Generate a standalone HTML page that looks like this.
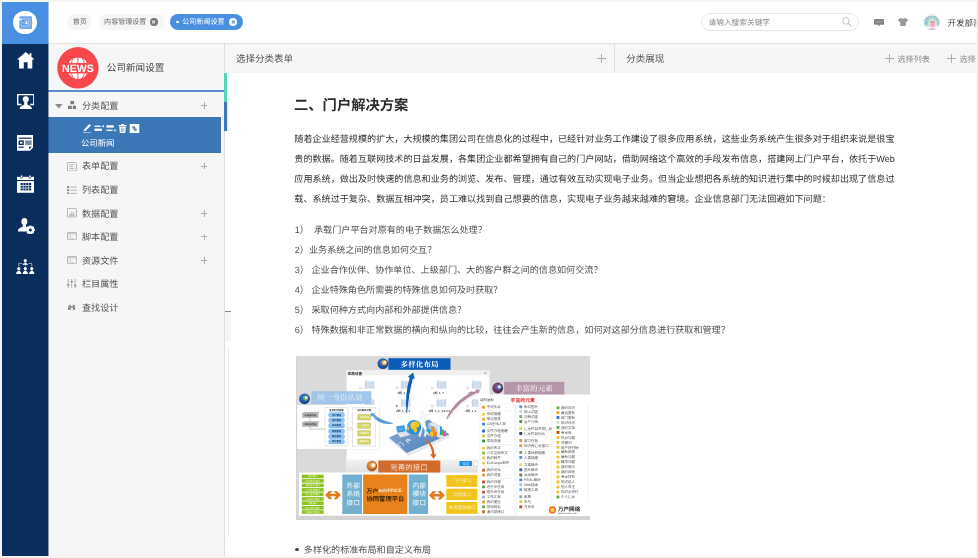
<!DOCTYPE html>
<html lang="zh-CN">
<head>
<meta charset="utf-8">
<title>公司新闻设置</title>
<style>
*{box-sizing:border-box;margin:0;padding:0}
html,body{width:978px;height:558px;overflow:hidden;background:#fff}
body{font-family:"Liberation Sans","Noto Sans CJK SC",sans-serif;color:#333;position:relative;text-rendering:geometricPrecision;-webkit-font-smoothing:antialiased}
.abs{position:absolute}
/* left nav */
#nav{left:2px;top:2px;width:46px;height:556px;background:#0b2d5c}
#logo{left:2px;top:2px;width:46px;height:41.5px;background:#4a90e2}
#logo .c{position:absolute;left:11.2px;top:8.7px;width:23.6px;height:23.6px;border-radius:50%;background:#fff}
.nico{position:absolute;left:15px;width:20px;height:20px}
/* top bar */
#top{left:48px;top:2px;width:930px;height:41.5px;background:#fff;border-bottom:1px solid #e4e4e4}
.tab{position:absolute;height:16px;top:14px;border-radius:8px;background:#f6f6f6;color:#666;font-size:7.05px;line-height:17.6px;white-space:nowrap;padding-left:6px;overflow:hidden}
.tab.on{background:#4a90e2;color:#fff;height:16.5px;top:13.9px;line-height:17.7px;border-radius:9px}
.x{position:absolute;top:50%;width:7.8px;height:7.8px;margin-top:-3.9px;border-radius:50%;background:#777}
.x:before,.x:after{content:"";position:absolute;left:3.45px;top:1.8px;width:.9px;height:4.2px;background:#f5f5f5;transform:rotate(45deg)}
.x:after{transform:rotate(-45deg)}
.tab.on .x{background:#fff}
.tab.on .x:before,.tab.on .x:after{background:#4a90e2}
#search{left:700.5px;top:13.4px;width:158.3px;height:17.7px;border:1px solid #e6e6e6;border-radius:9px;background:#fff;font-size:7.7px;line-height:17.6px;color:#8a8a8a;padding-left:7px}
/* left panel */
#panel{left:48px;top:43.5px;width:176.5px;height:515px;background:#f6f6f6;border-right:1px solid #dedede}
#ptitle{left:106.8px;top:61px;font-size:9.6px;line-height:16px;color:#444}
#pline{left:48px;top:90.2px;width:176px;height:1.4px;background:#5b8ccb}
.row{position:absolute;left:48.5px;width:175px;height:23.6px;font-size:9.1px;line-height:23.6px;color:#555}
.row .t{position:absolute;left:33.5px;top:1px}
.row .p{position:absolute;left:152.4px;top:8.5px;width:6.6px;height:6.6px}
.row .p:before{content:"";position:absolute;left:0;top:2.9px;width:6.6px;height:.8px;background:#adadad}
.row .p:after{content:"";position:absolute;top:0;left:2.9px;height:6.6px;width:.8px;background:#adadad}
.row .i{position:absolute;left:19px;top:7px;width:9.5px;height:9.5px}
#sel{left:48px;top:117.2px;width:173px;height:35.6px;background:#3c77b8}
#sel .t{position:absolute;left:33px;top:19.6px;font-size:8.4px;line-height:12px;color:#fff}
/* content header */
#chead{left:225px;top:43.5px;width:753px;height:29.3px;background:#f6f6f6}
#chead .h{position:absolute;top:0;font-size:9.5px;line-height:32.4px;color:#555}
#chead .s{position:absolute;top:0;font-size:8.1px;line-height:32.6px;color:#8a8a8a}
.plus{position:absolute;width:9px;height:9px}
.plus:before{content:"";position:absolute;left:0;top:4.1px;width:9px;height:.8px;background:#adadad}
.plus:after{content:"";position:absolute;top:0;left:4.1px;height:9px;width:.8px;background:#adadad}
/* content */
#h2{left:294px;top:93.9px;font-size:14.3px;line-height:24px;font-weight:700;color:#2c2c2c;white-space:nowrap}
.pl{position:absolute;left:294.3px;font-size:9.1px;line-height:20px;height:20px;color:#303030;white-space:nowrap}
.li{position:absolute;left:294.8px;font-size:9.1px;line-height:20px;height:20px;color:#505050;white-space:pre}
</style>
</head>
<body><div id="root" style="position:absolute;left:0;top:0;width:978px;height:558px;will-change:transform;transform:translateZ(0);filter:blur(.45px)">
<div id="nav" class="abs"></div>
<div id="logo" class="abs"><div class="c"></div></div>
<div class="abs" style="left:48px;top:43.5px;width:1px;height:515px;background:rgba(11,45,92,.45);z-index:3"></div><div class="abs" style="left:48px;top:2px;width:1px;height:41.5px;background:rgba(74,144,226,.55);z-index:3"></div>

<!-- logo glyph -->
<svg class="abs" style="left:18.6px;top:15.9px" width="13.6" height="13.2" viewBox="0 0 13.6 13.2"><rect x=".3" y=".3" width="13" height="12.6" rx="1.4" fill="#6fa6ea"/><rect x="1.9" y="1.9" width="9.8" height="9.4" rx=".6" fill="#a4c6f1"/><rect x="3.2" y="3.2" width="7.2" height="6.8" fill="none" stroke="#6fa6ea" stroke-width=".9"/><rect x="0" y="2.7" width="2.6" height="1.5" fill="#fff"/><path d="M2.6 4.6H8.4V8.8H2.6V7.5H7V5.9H2.6Z" fill="#4a90e2"/><rect x="5.6" y="5.4" width="2.6" height="2.6" fill="#fff"/><path d="M5.4 5.2 7 6.7 5.4 8.2Z" fill="#4a90e2"/></svg>
<!-- home -->
<svg class="abs" style="left:16.6px;top:52.3px" width="17.4" height="16.6" viewBox="0 0 17.4 16.6"><path d="M8.7 0 17.4 7.4H15.3V16.6H10.6V10.3H6.8V16.6H2.1V7.4H0Z" fill="#fff"/><rect x="12.6" y="1.2" width="1.8" height="3.6" fill="#fff"/></svg>
<!-- monitor person -->
<svg class="abs" style="left:16.6px;top:93.8px" width="17.6" height="15.6" viewBox="0 0 17.6 15.6"><path d="M0 0H17.6V11.2H13.2V9.8H16.2V1.3H1.4V9.8H4.4V11.2H0Z" fill="#fff"/><circle cx="8.8" cy="5.2" r="3" fill="#fff"/><path d="M2.6 15.6C2.6 11.6 6 11.4 7.2 10.4V8h3.2v2.4C11.6 11.4 15 11.6 15 15.6Z" fill="#fff"/></svg>
<!-- news -->
<svg class="abs" style="left:17px;top:135.2px" width="16.2" height="15.8" viewBox="0 0 16.2 15.8"><path d="M0 0H16.2V12.6L13 15.8H0Z" fill="#fff"/><rect x="1.6" y="2.6" width="13" height="1.2" fill="#0b2d5c"/><rect x="1.6" y="5.4" width="5.2" height="4.6" fill="#0b2d5c"/><rect x="3" y="6.8" width="2.4" height="1.8" fill="#fff"/><rect x="8.2" y="5.4" width="6.4" height="4.6" fill="#0b2d5c" opacity=".55"/><rect x="1.6" y="11.6" width="5.2" height="1.2" fill="#0b2d5c"/><path d="M12.2 11.8h2.6l-2.6 2.6z" fill="#0b2d5c"/></svg>
<!-- calendar -->
<svg class="abs" style="left:16.6px;top:175px" width="17.6" height="17.8" viewBox="0 0 17.6 17.8"><path d="M0 1.8H17.6V17.8H0Z" fill="#fff"/><rect x="0" y="5" width="17.6" height="1.1" fill="#0b2d5c"/><rect x="3.6" y="0" width="2" height="3.4" rx="1" fill="#fff" stroke="#0b2d5c" stroke-width=".6"/><rect x="12" y="0" width="2" height="3.4" rx="1" fill="#fff" stroke="#0b2d5c" stroke-width=".6"/><g fill="#0b2d5c"><rect x="3.6" y="8" width="2.2" height="2"/><rect x="6.4" y="8" width="2.2" height="2"/><rect x="9.2" y="8" width="2.2" height="2"/><rect x="12" y="8" width="2.2" height="2"/><rect x="3.6" y="10.7" width="2.2" height="2"/><rect x="6.4" y="10.7" width="2.2" height="2"/><rect x="9.2" y="10.7" width="2.2" height="2"/><rect x="12" y="10.7" width="2.2" height="2"/><rect x="3.6" y="13.4" width="2.2" height="2"/><rect x="6.4" y="13.4" width="2.2" height="2"/><rect x="9.2" y="13.4" width="2.2" height="2"/><rect x="12" y="13.4" width="2.2" height="2"/></g></svg>
<!-- person gear -->
<svg class="abs" style="left:18.4px;top:217.6px" width="17" height="16.4" viewBox="0 0 17 16.4"><ellipse cx="6.4" cy="3.6" rx="3" ry="3.6" fill="#fff"/><path d="M0 13.4C0 9.6 3.4 9.8 4.8 8.6V6.4h3.2v2.2C9 9.4 9.8 9.4 10.6 9.8 8.6 10.6 8 12 8.2 13.4Z" fill="#fff"/><circle cx="12.4" cy="12" r="3.1" fill="none" stroke="#fff" stroke-width="1.9"/><g stroke="#fff" stroke-width="1.7"><path d="M12.4 7.4v9.2M7.8 12h9.2M9.15 8.75l6.5 6.5M15.65 8.75l-6.5 6.5"/></g><circle cx="12.4" cy="12" r="1.5" fill="#0b2d5c"/></svg>
<!-- org chart -->
<svg class="abs" style="left:16px;top:258.6px" width="18.6" height="15" viewBox="0 0 18.6 15"><g fill="#fff"><circle cx="9.3" cy="1.6" r="1.6"/><path d="M6.8 6C6.8 4 8.3 4.2 8.6 3.4h1.4c.3.8 1.8.6 1.8 2.6Z"/><circle cx="2.8" cy="9.6" r="1.6"/><path d="M.2 15C.2 12.4 1.8 12.4 2.1 11.4h1.4c.3 1 1.9 1 1.9 3.6Z"/><circle cx="9.3" cy="9.6" r="1.6"/><path d="M6.7 15C6.7 12.4 8.3 12.4 8.6 11.4h1.4c.3 1 1.9 1 1.9 3.6Z"/><circle cx="15.8" cy="9.6" r="1.6"/><path d="M13.2 15C13.2 12.4 14.8 12.4 15.1 11.4h1.4c.3 1 1.9 1 1.9 3.6Z"/></g><path d="M2.8 7.4V4.4H6M15.8 7.4V4.4H12.6M9.3 6V7.6" fill="none" stroke="#fff" stroke-width=".7" opacity=".8"/></svg>
<div id="top" class="abs"></div>
<div class="tab" style="left:66.5px;width:25.8px;padding-left:6.2px">首页</div>
<div class="tab" style="left:98.5px;width:66px;padding-left:5.6px">内容管理设置<span class="x" style="left:51.5px"></span></div>
<div class="tab on" style="left:170px;width:73px;padding-left:12.3px">公司新闻设置<span class="x" style="left:59.3px"></span><span class="abs" style="left:6.2px;top:7.1px;width:2.4px;height:2.4px;border-radius:50%;background:#fff"></span></div>
<div id="search" class="abs">请输入搜索关键字</div>
<div class="abs" style="left:947.6px;top:14.9px;font-size:8.45px;line-height:16px;color:#444;white-space:nowrap">开发部测试</div>


<!-- search icon -->
<svg class="abs" style="left:841px;top:16.1px" width="12" height="12" viewBox="0 0 12 12"><circle cx="4.9" cy="5" r="3.2" fill="none" stroke="#b4b4b4" stroke-width=".8"/><path d="M7.3 7.4 10.2 10.2" stroke="#b4b4b4" stroke-width="1" stroke-linecap="round"/></svg>
<!-- chat icon -->
<svg class="abs" style="left:873.8px;top:18.9px" width="10.2" height="7.4" viewBox="0 0 10.2 7.4"><path d="M1 0H9.2Q10.2 0 10.2 1V4.8Q10.2 5.8 9.2 5.8H6.3L5.1 7.2 3.9 5.8H1Q0 5.8 0 4.800V1Q0 0 1 0Z" fill="#858585"/><g fill="#c4c4c4"><rect x="2.6" y="2.4" width="1" height="1"/><rect x="4.6" y="2.4" width="1" height="1"/><rect x="6.6" y="2.4" width="1" height="1"/></g></svg>
<!-- shirt icon -->
<svg class="abs" style="left:897.6px;top:18.1px" width="10" height="8.2" viewBox="0 0 10 8.200"><path d="M3 0Q5 1.500 7 0L10 1.600 9 4 7.800 3.500V8.200H2.200V3.500L1 4 0 1.600Z" fill="#989898"/></svg>
<!-- avatar -->
<svg class="abs" style="left:923.1px;top:12.8px" width="17.6" height="17.6" viewBox="0 0 17.6 17.6"><defs><clipPath id="avc"><circle cx="8.8" cy="8.8" r="8.6"/></clipPath></defs><g clip-path="url(#avc)"><rect width="17.6" height="17.6" fill="#f1f3f4"/><path d="M1 11Q.6 3.400 8.400 2.400 16 2.600 16.600 10.500 16 13 14 13.500L13.300 9Q12 5.600 9 6 6 6.400 5.600 9.500L5.800 13.600Q2.600 13.800 1 11Z" fill="#a5d3dc"/><g fill="#c58a7c"><circle cx="3" cy="7" r=".7"/><circle cx="5.600" cy="3.800" r=".6"/><circle cx="12" cy="3.600" r=".7"/><circle cx="15" cy="7" r=".6"/><circle cx="2.600" cy="10.800" r=".6"/><circle cx="15.200" cy="10.800" r=".6"/></g><g fill="#4eb2c8"><circle cx="4.200" cy="5.200" r=".6"/><circle cx="9" cy="3" r=".6"/><circle cx="14" cy="5.200" r=".6"/><circle cx="3.800" cy="9.600" r=".6"/></g><path d="M5.800 9.500Q6 6.400 9.200 6.200 12.600 6.200 13 9.600L13.400 14 5.800 14Z" fill="#ecdfd2"/><ellipse cx="9.500" cy="10" rx="2.700" ry="3.300" fill="#e6c6ba"/><path d="M7.400 9.200H11.600" stroke="#8a7f88" stroke-width=".7"/><circle cx="9.500" cy="12.200" r="2" fill="#f4a9bd"/><path d="M4.500 17.600Q9 12.600 14 17.600Z" fill="#dfb6e6"/></g></svg>
<div id="panel" class="abs"></div>

<!-- NEWS logo -->
<svg class="abs" style="left:56.8px;top:46.5px" width="42" height="42" viewBox="0 0 42 42"><circle cx="20.9" cy="20.800" r="20.700" fill="#f9484b"/><clipPath id="gt"><rect x="0" y="10.400" width="42" height="5.700"/></clipPath><clipPath id="gb"><rect x="0" y="26.400" width="42" height="5.700"/></clipPath><g clip-path="url(#gt)"><circle cx="20.900" cy="21.200" r="10.800" fill="#fff"/><g stroke="#f9484b" stroke-width=".9" fill="none"><path d="M20.900 10V17"/><path d="M17.200 10Q14.800 13 14.300 17M24.600 10Q27 13 27.500 17"/><path d="M13.600 11.500Q12 13.500 11.300 17M28.200 11.500Q29.800 13.500 30.500 17"/></g></g><g clip-path="url(#gb)"><circle cx="20.900" cy="21.200" r="10.800" fill="#fff"/><g stroke="#f9484b" stroke-width=".9" fill="none"><path d="M20.900 25V33"/><path d="M17.200 32.400Q14.800 29.400 14.300 25.400M24.600 32.400Q27 29.400 27.500 25.400"/><path d="M13.600 31Q12 29 11.300 25.400M28.200 31Q29.800 29 30.500 25.400"/></g></g><text x="20.900" y="25.200" font-family="Liberation Sans,sans-serif" font-weight="700" font-size="10.700" fill="#fff" text-anchor="middle" textLength="31.600" lengthAdjust="spacingAndGlyphs">NEWS</text></svg>
<!-- tree icons -->
<svg class="abs" style="left:55.400px;top:103.500px" width="7.600" height="4.600" viewBox="0 0 7.600 4.600"><path d="M0 0H7.600L3.800 4.600Z" fill="#8c8c8c"/></svg>
<svg class="abs" style="left:67.500px;top:101.200px" width="8.600" height="8.200" viewBox="0 0 8.600 8.200"><g fill="#7d7d7d"><rect x="2.300" y="0" width="3.800" height="3.300" rx=".4"/><rect x="0" y="4.700" width="3.800" height="3.500" rx=".4"/><rect x="4.800" y="4.700" width="3.800" height="3.500" rx=".4"/></g></svg>
<svg class="abs" style="left:66.800px;top:161.500px" width="9.800" height="9.400" viewBox="0 0 9.800 9.400"><rect x=".45" y=".45" width="8.900" height="8.500" rx=".8" fill="none" stroke="#a9a9a9" stroke-width=".9"/><path d="M2.400 2.800H7.400M2.400 4.700H5.800M2.400 6.600H7.400" stroke="#a9a9a9" stroke-width=".8"/></svg>
<svg class="abs" style="left:66.800px;top:185.500px" width="9.800" height="8.400" viewBox="0 0 9.800 8.400"><g fill="#8d8d8d"><rect x="0" y="0" width="2.200" height="2"/><rect x="0" y="3.200" width="2.200" height="2"/><rect x="0" y="6.400" width="2.200" height="2"/></g><path d="M3.600 1H9.800M3.600 4.200H9.800M3.600 7.400H9.800" stroke="#a5a5a5" stroke-width=".8"/></svg>
<svg class="abs" style="left:66.800px;top:208.200px" width="9.800" height="9.400" viewBox="0 0 9.800 9.400"><rect x=".45" y=".45" width="8.900" height="8.500" rx=".8" fill="none" stroke="#a9a9a9" stroke-width=".9"/><path d="M3 7.400V5.200M4.900 7.400V3.600M6.800 7.400V4.600" stroke="#a0a0a0" stroke-width=".9"/><path d="M2.200 7.500H7.600" stroke="#a0a0a0" stroke-width=".6"/></svg>
<svg class="abs" style="left:66.800px;top:232.300px" width="9.800" height="8.200" viewBox="0 0 9.800 8.200"><rect x=".45" y=".45" width="8.900" height="7.300" rx=".7" fill="none" stroke="#a9a9a9" stroke-width=".9"/><path d="M.5 1.900H9.300" stroke="#a9a9a9" stroke-width=".7"/><path d="M2.200 3.600 3.700 4.900 2.200 6.200M4.400 6.300H6.200" fill="none" stroke="#a0a0a0" stroke-width=".7"/></svg>
<svg class="abs" style="left:66.800px;top:255.900px" width="9.800" height="8.200" viewBox="0 0 9.800 8.200"><rect x=".45" y=".45" width="8.900" height="7.300" rx=".7" fill="none" stroke="#a9a9a9" stroke-width=".9"/><path d="M.5 1.900H9.300" stroke="#a9a9a9" stroke-width=".7"/><path d="M2.200 3.600 3.700 4.900 2.200 6.200M4.400 6.300H6.200" fill="none" stroke="#a0a0a0" stroke-width=".7"/></svg>
<svg class="abs" style="left:67.200px;top:278.800px" width="9.400" height="9" viewBox="0 0 9.400 9"><path d="M1.200 0V9M4.700 0V9M8.200 0V9" stroke="#9a9a9a" stroke-width=".8"/><path d="M0 5.800H2.400M3.500 2.600H5.900M7 6.600H9.400" stroke="#8a8a8a" stroke-width="1.200"/></svg>
<svg class="abs" style="left:67.600px;top:304.300px" width="7.800" height="6.200" viewBox="0 0 7.800 6.200"><g fill="#8f8f8f"><path d="M.9 1.200 2.900 0.400V6.200H0V3.400Z"/><path d="M6.900 1.200 4.900.4V6.200H7.800V3.400Z"/><rect x="2.900" y="2.200" width="2" height="1.600"/></g></svg>
<div id="ptitle" class="abs">公司新闻设置</div>
<div id="pline" class="abs"></div>
<div class="row" style="top:93.7px"><span class="t">分类配置</span><span class="p"></span></div>
<div id="sel" class="abs"><svg class="abs" style="left:35px;top:6.700px" width="57" height="9.600" viewBox="0 0 57 9.600"><g fill="#fff"><path d="M6.400 0 8 1.400 2.600 6.800.6 7.400 1.100 5.400Z"/><rect x="0" y="8.500" width="8.200" height=".9"/><rect x="11.500" y="1.600" width="6.200" height="1.300"/><rect x="11.500" y="4.600" width="7.400" height="2.300"/><path d="M18.600 2.200 20.800 0.900V3.500Z"/><rect x="23.400" y="1.300" width="7.400" height="2.300"/><rect x="23.400" y="5.600" width="6.200" height="1.300"/><path d="M30.400 6.200 32.600 4.900V7.500Z"/><path d="M35.600 1.100H43.600V2.200H35.600ZM38.200 0H41V1.100H38.200ZM36.300 2.800H42.900L42.300 9.100H36.900Z"/><rect x="46.700" y="0" width="9.600" height="9.100"/></g><path d="M38.400 3.800V8M39.600 3.800V8M40.800 3.800V8" stroke="#3c77b8" stroke-width=".5"/><path d="M49.600 2.600 51.600 2.600 53.400 6.400 51.400 6.400ZM50.200 3.600 49 3.600M52.800 5.400 54 5.400" stroke="#3c77b8" stroke-width=".6" fill="#6d9bd0"/></svg><span class="t">公司新闻</span></div>
<div class="row" style="top:154.3px"><span class="t">表单配置</span><span class="p"></span></div>
<div class="row" style="top:177.9px"><span class="t">列表配置</span></div>
<div class="row" style="top:201.5px"><span class="t">数据配置</span><span class="p"></span></div>
<div class="row" style="top:225.1px"><span class="t">脚本配置</span><span class="p"></span></div>
<div class="row" style="top:248.7px"><span class="t">资源文件</span><span class="p"></span></div>
<div class="row" style="top:272.3px"><span class="t">栏目属性</span></div>
<div class="row" style="top:295.9px"><span class="t">查找设计</span></div>

<div id="chead" class="abs">
 <span class="h" style="left:11px">选择分类表单</span>
 <span class="plus" style="left:371.7px;top:10.8px"></span>
 <span class="abs" style="left:389.3px;top:0;width:1px;height:29.3px;background:#dedede"></span>
 <span class="h" style="left:401.3px">分类展现</span>
 <span class="plus" style="left:660px;top:10.8px"></span>
 <span class="s" style="left:672.5px">选择列表</span>
 <span class="plus" style="left:722px;top:10.8px"></span>
 <span class="s" style="left:734.5px">选择</span>
</div>


<div class="abs" style="left:224.300px;top:72.800px;width:3px;height:29px;background:#50d9b9"></div>
<div class="abs" style="left:224.300px;top:101.800px;width:3px;height:29.200px;background:#3c77b8;box-shadow:1.500px 0 1.500px rgba(120,160,230,.25)"></div>
<div class="abs" style="left:224.500px;top:311px;width:6.800px;height:1px;background:#8e8e8e"></div>
<div class="abs" style="left:224.500px;top:312px;width:6.800px;height:29.500px;background:#f5f5f5"></div>
<div class="abs" style="left:228px;top:348px;width:1px;height:188.600px;background:#ececec"></div>
<!--DG--><svg id="dg" class="abs" style="left:295.7px;top:355.7px" width="294" height="164" viewBox="295.7 355.7 294 164" font-family='Liberation Sans,Noto Sans CJK SC,sans-serif'>
<defs><radialGradient id="cb" cx=".4" cy=".35" r=".7"><stop offset="0" stop-color="#3f7fd0"/><stop offset="1" stop-color="#0b3c86"/></radialGradient><radialGradient id="cm" cx=".4" cy=".35" r=".7"><stop offset="0" stop-color="#8e5a86"/><stop offset="1" stop-color="#4a1f48"/></radialGradient><radialGradient id="co" cx=".4" cy=".35" r=".7"><stop offset="0" stop-color="#f0a050"/><stop offset="1" stop-color="#a8500f"/></radialGradient><linearGradient id="pl" x1="0" y1="0" x2="1" y2="1"><stop offset="0" stop-color="#86a9d2"/><stop offset="1" stop-color="#4f7db5"/></linearGradient><linearGradient id="wb" x1="0" y1="0" x2="0" y2="1"><stop offset="0" stop-color="#f4f4f4"/><stop offset="1" stop-color="#dedede"/></linearGradient></defs>
<rect x="295.7" y="355.7" width="294" height="164" fill="#dadada"/>
<rect x="346.3" y="369.7" width="142.8" height="103" fill="#fff"/>
<rect x="346.3" y="369.7" width="142.8" height="5.3" fill="#f0f0f0"/>
<rect x="346.3" y="458.9" width="131.2" height="13.8" fill="url(#wb)"/>
<text x="347.4" y="374.3" font-size="3.6" font-weight="700" fill="#222">布局设置</text>
<path d="M484.2 371.7l1.8 1.8m0-1.8l-1.8 1.8" stroke="#777" stroke-width=".5"/>
<rect x="459.2" y="460.8" width="12.5" height="4.9" rx=".6" fill="#1e8fe6"/><text x="465.4" y="464.5" font-size="3.2" fill="#d8ecff" text-anchor="middle">保存</text>
<rect x="473.4" y="460.8" width="4" height="4.9" rx=".5" fill="#fff" stroke="#bbb" stroke-width=".4"/>
<rect x="364.5" y="381" width="9.6" height="7.2" fill="#c9d7ea"/><rect x="364.5" y="380" width="2.6" height="1.2" fill="#dbe5f2"/>
<path d="M367.7 381.6V388M370.9 381.6V388" stroke="#eef3f9" stroke-width=".7"/>
<circle cx="360.3" cy="387.6" r="1.1" fill="#fff" stroke="#aaa" stroke-width=".4"/>
<rect x="400.6" y="381" width="9.6" height="7.2" fill="#c9d7ea"/><rect x="400.6" y="380" width="2.6" height="1.2" fill="#dbe5f2"/>
<path d="M403.8 381.6V388M407.0 381.6V388" stroke="#eef3f9" stroke-width=".7"/>
<circle cx="396.4" cy="387.6" r="1.1" fill="#fff" stroke="#aaa" stroke-width=".4"/>
<rect x="436.4" y="381" width="9.6" height="7.2" fill="#c9d7ea"/><rect x="436.4" y="380" width="2.6" height="1.2" fill="#dbe5f2"/>
<path d="M439.6 381.6V388M442.8 381.6V388" stroke="#eef3f9" stroke-width=".7"/>
<circle cx="432.2" cy="387.6" r="1.1" fill="#fff" stroke="#aaa" stroke-width=".4"/>
<rect x="471.5" y="381" width="9.6" height="7.2" fill="#c9d7ea"/><rect x="471.5" y="380" width="2.6" height="1.2" fill="#dbe5f2"/>
<path d="M474.7 381.6V388M477.9 381.6V388" stroke="#eef3f9" stroke-width=".7"/>
<circle cx="467.3" cy="387.6" r="1.1" fill="#fff" stroke="#aaa" stroke-width=".4"/>
<rect x="364.5" y="399.2" width="9.6" height="7.2" fill="#c9d7ea"/><rect x="364.5" y="398.2" width="2.6" height="1.2" fill="#dbe5f2"/>
<path d="M367.7 399.8V406.2M370.9 399.8V406.2" stroke="#eef3f9" stroke-width=".7"/>
<circle cx="360.3" cy="405.6" r="1.1" fill="#fff" stroke="#aaa" stroke-width=".4"/>
<rect x="400.6" y="399.2" width="9.6" height="7.2" fill="#c9d7ea"/><rect x="400.6" y="398.2" width="2.6" height="1.2" fill="#dbe5f2"/>
<path d="M403.8 399.8V406.2M407.0 399.8V406.2" stroke="#eef3f9" stroke-width=".7"/>
<circle cx="396.4" cy="405.6" r="1.1" fill="#fff" stroke="#aaa" stroke-width=".4"/>
<rect x="436.4" y="399.2" width="9.6" height="7.2" fill="#c9d7ea"/><rect x="436.4" y="398.2" width="2.6" height="1.2" fill="#dbe5f2"/>
<path d="M439.6 399.8V406.2M442.8 399.8V406.2" stroke="#eef3f9" stroke-width=".7"/>
<circle cx="432.2" cy="405.6" r="1.1" fill="#fff" stroke="#aaa" stroke-width=".4"/>
<rect x="471.5" y="399.2" width="9.6" height="7.2" fill="#c9d7ea"/><rect x="471.5" y="398.2" width="2.6" height="1.2" fill="#dbe5f2"/>
<path d="M474.7 399.8V406.2M477.9 399.8V406.2" stroke="#eef3f9" stroke-width=".7"/>
<circle cx="467.3" cy="405.6" r="1.1" fill="#fff" stroke="#aaa" stroke-width=".4"/>
<circle cx="396.4" cy="405.6" r=".7" fill="#1b4f7a"/>
<text x="397.2" y="393.6" font-size="2.9" font-weight="700" fill="#333">2列_1</text>
<text x="432.6" y="393.6" font-size="2.9" font-weight="700" fill="#333">2列_1_7</text>
<text x="468.0" y="393.6" font-size="2.9" font-weight="700" fill="#333">2列</text>
<text x="395.6" y="411.3" font-size="2.9" font-weight="700" fill="#333">2列_1_1_1</text>
<text x="428.4" y="411.3" font-size="2.9" font-weight="700" fill="#333">2列_1_1_1-1:1:1</text>
<text x="465.0" y="411.3" font-size="2.9" font-weight="700" fill="#333">4列_1_1_</text>
<rect x="388.1" y="357.9" width="62.1" height="11.6" fill="#0a5cb8"/>
<text x="419.3" y="366.5" font-size="7.5" font-weight="700" fill="#fff" text-anchor="middle" font-family='Liberation Serif,Noto Serif CJK SC,serif' letter-spacing=".1">多样化布局</text>
<circle cx="382.6" cy="363.3" r="5.4" fill="url(#cb)"/><circle cx="384" cy="362.4" r="2.6" fill="#e9a35a"/><circle cx="384.4" cy="362" r="1.5" fill="#fff" opacity=".85"/>
<rect x="478.3" y="394.2" width="111.4" height="122" fill="#fff"/>
<rect x="478.8" y="403.6" width="35.6" height="112" fill="none" stroke="#e3edf6" stroke-width=".5"/>
<path d="M515.8 403V516M551.6 403V503M588 403V503" stroke="#e6eff7" stroke-width=".7"/>
<text x="480" y="400.5" font-size="3.3" fill="#333">结构图视</text>
<text x="510.2" y="401.4" font-size="4.9" font-weight="700" fill="#d8312c">丰富的元素</text>
<rect x="481.8" y="405.5" width="2.9" height="2.9" rx=".4" fill="#f29a2e"/><text x="486.4" y="408.2" font-size="3.5" fill="#505050">今日头条</text>
<rect x="481.8" y="412.5" width="2.9" height="2.9" rx=".4" fill="#f3d24a"/><text x="486.4" y="415.2" font-size="3.5" fill="#505050">系统提醒</text>
<rect x="481.8" y="417.5" width="2.9" height="2.9" rx=".4" fill="#e7b53c"/><text x="486.4" y="420.2" font-size="3.5" fill="#505050">单点登录</text>
<rect x="481.8" y="422.4" width="2.9" height="2.9" rx=".4" fill="#3d8bd6"/><text x="486.4" y="425.1" font-size="3.5" fill="#505050">OA在线人数</text>
<rect x="481.8" y="429.3" width="2.9" height="2.9" rx=".4" fill="#2f6fd0"/><text x="486.4" y="432.1" font-size="3.5" fill="#505050">文件办理提醒</text>
<rect x="481.8" y="434.3" width="2.9" height="2.9" rx=".4" fill="#d8c13a"/><text x="486.4" y="437.1" font-size="3.5" fill="#505050">文件办理</text>
<rect x="481.8" y="439.3" width="2.9" height="2.9" rx=".4" fill="#4c9a45"/><text x="486.4" y="442.1" font-size="3.5" fill="#505050">常用流程</text>
<rect x="481.8" y="446.4" width="2.9" height="2.9" rx=".4" fill="#f0cf3e"/><text x="486.4" y="449.1" font-size="3.5" fill="#505050">我的收文</text>
<rect x="481.8" y="451.3" width="2.9" height="2.9" rx=".4" fill="#8dbb4e"/><text x="486.4" y="454.1" font-size="3.5" fill="#505050">公文交换收文</text>
<rect x="481.8" y="456.2" width="2.9" height="2.9" rx=".4" fill="#eccb57"/><text x="486.4" y="458.9" font-size="3.5" fill="#505050">我的邮件</text>
<rect x="481.8" y="461.4" width="2.9" height="2.9" rx=".4" fill="#eccb57"/><text x="486.4" y="464.1" font-size="3.5" fill="#505050">Exchange邮件</text>
<rect x="481.8" y="468.5" width="2.9" height="2.9" rx=".4" fill="#c9702e"/><text x="486.4" y="471.2" font-size="3.5" fill="#505050">我的论坛</text>
<rect x="481.8" y="473.4" width="2.9" height="2.9" rx=".4" fill="#e09a3a"/><text x="486.4" y="476.1" font-size="3.5" fill="#505050">我的调查</text>
<rect x="481.8" y="480.2" width="2.9" height="2.9" rx=".4" fill="#cf4a35"/><text x="486.4" y="482.9" font-size="3.5" fill="#505050">我的日程</text>
<rect x="481.8" y="485.1" width="2.9" height="2.9" rx=".4" fill="#5aa347"/><text x="486.4" y="487.9" font-size="3.5" fill="#505050">进行中任务</text>
<rect x="481.8" y="490.4" width="2.9" height="2.9" rx=".4" fill="#b55b3a"/><text x="486.4" y="493.1" font-size="3.5" fill="#505050">督办的任务</text>
<rect x="481.8" y="495.3" width="2.9" height="2.9" rx=".4" fill="#9ab9d6"/><text x="486.4" y="498.1" font-size="3.5" fill="#505050">工作汇报</text>
<rect x="481.8" y="500.2" width="2.9" height="2.9" rx=".4" fill="#e0a03a"/><text x="486.4" y="502.9" font-size="3.5" fill="#505050">我的便签</text>
<rect x="481.8" y="505.1" width="2.9" height="2.9" rx=".4" fill="#6aa84f"/><text x="486.4" y="507.9" font-size="3.5" fill="#505050">常用网址</text>
<rect x="481.8" y="510.0" width="2.9" height="2.9" rx=".4" fill="#b5762a"/><text x="486.4" y="512.8" font-size="3.5" fill="#505050">通讯录接口</text>
<path d="M479.4 410.4H511.8" stroke="#e4e4e4" stroke-width=".4"/>
<path d="M479.4 427.3H511.8" stroke="#e4e4e4" stroke-width=".4"/>
<path d="M479.4 444.3H511.8" stroke="#e4e4e4" stroke-width=".4"/>
<path d="M479.4 466.4H511.8" stroke="#e4e4e4" stroke-width=".4"/>
<path d="M479.4 478.3H511.8" stroke="#e4e4e4" stroke-width=".4"/>
<rect x="519.0" y="405.0" width="2.9" height="2.9" rx=".4" fill="#5b9bd5"/><text x="523.6" y="407.8" font-size="3.5" fill="#505050">新闻图片</text>
<rect x="519.0" y="409.8" width="2.9" height="2.9" rx=".4" fill="#d9d9d9"/><text x="523.6" y="412.6" font-size="3.5" fill="#505050">网上调查</text>
<rect x="519.0" y="414.8" width="2.9" height="2.9" rx=".4" fill="#7fb26a"/><text x="523.6" y="417.6" font-size="3.5" fill="#505050">问卷调查</text>
<rect x="519.0" y="419.8" width="2.9" height="2.9" rx=".4" fill="#4c9a45"/><text x="523.6" y="422.6" font-size="3.5" fill="#505050">客户订阅</text>
<rect x="519.0" y="426.8" width="2.9" height="2.9" rx=".4" fill="#e9cf6b"/><text x="523.6" y="429.6" font-size="3.5" fill="#505050">信息栏目并排信息</text>
<rect x="519.0" y="431.8" width="2.9" height="2.9" rx=".4" fill="#444"/><text x="523.6" y="434.6" font-size="3.5" fill="#505050">信息栏目列表</text>
<rect x="519.0" y="438.8" width="2.9" height="2.9" rx=".4" fill="#e39a34"/><text x="523.6" y="441.6" font-size="3.5" fill="#505050">窗口任务</text>
<rect x="519.0" y="443.9" width="2.9" height="2.9" rx=".4" fill="#e39a34"/><text x="523.6" y="446.6" font-size="3.5" fill="#505050">知识库信息窗口</text>
<rect x="519.0" y="450.8" width="2.9" height="2.9" rx=".4" fill="#7aa35c"/><text x="523.6" y="453.6" font-size="3.5" fill="#505050">人事休假提醒</text>
<rect x="519.0" y="455.7" width="2.9" height="2.9" rx=".4" fill="#5b9bd5"/><text x="523.6" y="458.4" font-size="3.5" fill="#505050">人事提醒</text>
<rect x="519.0" y="463.0" width="2.9" height="2.9" rx=".4" fill="#f2d548"/><text x="523.6" y="465.8" font-size="3.5" fill="#505050">文本模块</text>
<rect x="519.0" y="468.0" width="2.9" height="2.9" rx=".4" fill="#3a6ea5"/><text x="523.6" y="470.8" font-size="3.5" fill="#505050">图片模块</text>
<rect x="519.0" y="473.2" width="2.9" height="2.9" rx=".4" fill="#7f7a55"/><text x="523.6" y="475.9" font-size="3.5" fill="#505050">滚动模块</text>
<rect x="519.0" y="478.1" width="2.9" height="2.9" rx=".4" fill="#3f86d8"/><text x="523.6" y="480.9" font-size="3.5" fill="#505050">HTML模块</text>
<rect x="519.0" y="483.0" width="2.9" height="2.9" rx=".4" fill="#9cc3e6"/><text x="523.6" y="485.8" font-size="3.5" fill="#505050">Web搜索</text>
<rect x="519.0" y="487.9" width="2.9" height="2.9" rx=".4" fill="#6fa8dc"/><text x="523.6" y="490.6" font-size="3.5" fill="#505050">链接工具</text>
<rect x="519.0" y="495.0" width="2.9" height="2.9" rx=".4" fill="#8aa9c2"/><text x="523.6" y="497.8" font-size="3.5" fill="#505050">股票</text>
<rect x="519.0" y="499.9" width="2.9" height="2.9" rx=".4" fill="#f1c232"/><text x="523.6" y="502.6" font-size="3.5" fill="#505050">天气</text>
<rect x="519.0" y="505.1" width="2.9" height="2.9" rx=".4" fill="#cc4125"/><text x="523.6" y="507.9" font-size="3.5" fill="#505050">万年历</text>
<path d="M516.6 424.7H549.0" stroke="#e4e4e4" stroke-width=".4"/>
<path d="M516.6 436.7H549.0" stroke="#e4e4e4" stroke-width=".4"/>
<path d="M516.6 448.8H549.0" stroke="#e4e4e4" stroke-width=".4"/>
<path d="M516.6 460.8H549.0" stroke="#e4e4e4" stroke-width=".4"/>
<path d="M516.6 493.0H549.0" stroke="#e4e4e4" stroke-width=".4"/>
<rect x="556.2" y="406.1" width="2.9" height="2.9" rx=".4" fill="#6aa84f"/><text x="560.8" y="408.9" font-size="3.5" fill="#505050">我的日历</text>
<rect x="556.2" y="410.9" width="2.9" height="2.9" rx=".4" fill="#e0a82e"/><text x="560.8" y="413.6" font-size="3.5" fill="#505050">最近更新</text>
<rect x="556.2" y="415.8" width="2.9" height="2.9" rx=".4" fill="#3c78d8"/><text x="560.8" y="418.6" font-size="3.5" fill="#505050">部门更新</text>
<rect x="556.2" y="420.6" width="2.9" height="2.9" rx=".4" fill="#d9d9d9"/><text x="560.8" y="423.4" font-size="3.5" fill="#505050">知识日历</text>
<rect x="556.2" y="425.7" width="2.9" height="2.9" rx=".4" fill="#6aa84f"/><text x="560.8" y="428.4" font-size="3.5" fill="#505050">我的文档</text>
<rect x="556.2" y="430.7" width="2.9" height="2.9" rx=".4" fill="#b45f06"/><text x="560.8" y="433.4" font-size="3.5" fill="#505050">专家库</text>
<rect x="556.2" y="435.7" width="2.9" height="2.9" rx=".4" fill="#f1c232"/><text x="560.8" y="438.4" font-size="3.5" fill="#505050">热点问题</text>
<rect x="556.2" y="440.6" width="2.9" height="2.9" rx=".4" fill="#f1c232"/><text x="560.8" y="443.4" font-size="3.5" fill="#505050">关键词</text>
<rect x="556.2" y="445.6" width="2.9" height="2.9" rx=".4" fill="#f1c232"/><text x="560.8" y="448.4" font-size="3.5" fill="#505050">用户排行榜</text>
<rect x="556.2" y="450.4" width="2.9" height="2.9" rx=".4" fill="#f1c232"/><text x="560.8" y="453.1" font-size="3.5" fill="#505050">最新回答</text>
<rect x="556.2" y="455.4" width="2.9" height="2.9" rx=".4" fill="#f1c232"/><text x="560.8" y="458.1" font-size="3.5" fill="#505050">最新问题</text>
<rect x="556.2" y="460.3" width="2.9" height="2.9" rx=".4" fill="#f1c232"/><text x="560.8" y="463.1" font-size="3.5" fill="#505050">精华问题</text>
<rect x="556.2" y="465.2" width="2.9" height="2.9" rx=".4" fill="#f1c232"/><text x="560.8" y="467.9" font-size="3.5" fill="#505050">我的提问</text>
<rect x="556.2" y="470.3" width="2.9" height="2.9" rx=".4" fill="#f1c232"/><text x="560.8" y="473.1" font-size="3.5" fill="#505050">我的回答</text>
<rect x="556.2" y="475.3" width="2.9" height="2.9" rx=".4" fill="#f1c232"/><text x="560.8" y="478.1" font-size="3.5" fill="#505050">专家排名</text>
<rect x="556.2" y="480.2" width="2.9" height="2.9" rx=".4" fill="#f1c232"/><text x="560.8" y="482.9" font-size="3.5" fill="#505050">知识达人</text>
<rect x="556.2" y="485.3" width="2.9" height="2.9" rx=".4" fill="#f1c232"/><text x="560.8" y="488.1" font-size="3.5" fill="#505050">他人关注</text>
<rect x="556.2" y="490.2" width="2.9" height="2.9" rx=".4" fill="#f1c232"/><text x="560.8" y="492.9" font-size="3.5" fill="#505050">知识云排行</text>
<rect x="556.2" y="495.3" width="2.9" height="2.9" rx=".4" fill="#6aa84f"/><text x="560.8" y="498.1" font-size="3.5" fill="#505050">个人信息</text>
<circle cx="552.1" cy="509.6" r="3.6" fill="#f36b2a"/><circle cx="552.1" cy="509.6" r="2.1" fill="#ffd24a"/>
<text x="557.6" y="510.6" font-size="5.6" font-weight="700" fill="#2b2b2b">万户网络</text><text x="557.8" y="513.6" font-size="2" font-weight="700" fill="#555" letter-spacing=".35">WWW.WHIR.NET</text>
<rect x="503.8" y="381.6" width="60.2" height="12.5" fill="#b795a8"/>
<text x="533.6" y="390.6" font-size="7.6" font-weight="700" fill="#eadde4" text-anchor="middle" font-family='Liberation Serif,Noto Serif CJK SC,serif'>丰富的元素</text>
<circle cx="497.4" cy="387.7" r="5.4" fill="url(#cm)"/><circle cx="498.6" cy="386.8" r="2.6" fill="#4a78c8"/><circle cx="499" cy="386.4" r="1.5" fill="#fff" opacity=".9"/>
<rect x="297.4" y="405.3" width="82" height="44" fill="#000" opacity=".08"/>
<rect x="296.8" y="404.7" width="81.8" height="44.200" fill="#fff"/>
<rect x="324.600" y="407.300" width="23.100" height="38.400" fill="#fff" stroke="#888" stroke-width=".35" stroke-dasharray=".7 .5"/>
<rect x="352.200" y="407.300" width="23.100" height="38.400" fill="#fff" stroke="#888" stroke-width=".35" stroke-dasharray=".7 .5"/>
<text x="336.200" y="410.600" font-size="2.400" font-weight="700" fill="#333" text-anchor="middle">支持的连接库</text><text x="363.800" y="410.600" font-size="2.400" font-weight="700" fill="#333" text-anchor="middle">系统提供功能</text>
<rect x="328.300" y="412.2" width="15.900" height="4.600" rx="1.600" fill="#8cc4f6" stroke="#6aa6dd" stroke-width=".3"/><text x="336.200" y="415.4" font-size="2.300" font-weight="700" fill="#1f3f66" text-anchor="middle">用户管理</text>
<rect x="328.300" y="417.6" width="15.900" height="4.600" rx="1.600" fill="#8cc4f6" stroke="#6aa6dd" stroke-width=".3"/><text x="336.200" y="420.8" font-size="2.300" font-weight="700" fill="#1f3f66" text-anchor="middle">组织管理</text>
<rect x="328.300" y="423.0" width="15.900" height="4.600" rx="1.600" fill="#8cc4f6" stroke="#6aa6dd" stroke-width=".3"/><text x="336.200" y="426.2" font-size="2.300" font-weight="700" fill="#1f3f66" text-anchor="middle">权限管理</text>
<rect x="328.300" y="428.6" width="15.900" height="4.600" rx="1.600" fill="#8cc4f6" stroke="#6aa6dd" stroke-width=".3"/><text x="336.200" y="431.8" font-size="2.300" font-weight="700" fill="#1f3f66" text-anchor="middle">数据管理</text>
<rect x="328.300" y="433.9" width="15.900" height="4.600" rx="1.600" fill="#8cc4f6" stroke="#6aa6dd" stroke-width=".3"/><text x="336.200" y="437.1" font-size="2.300" font-weight="700" fill="#1f3f66" text-anchor="middle">备份管理</text>
<rect x="328.300" y="439.1" width="15.900" height="4.600" rx="1.600" fill="#8cc4f6" stroke="#6aa6dd" stroke-width=".3"/><text x="336.200" y="442.2" font-size="2.300" font-weight="700" fill="#1f3f66" text-anchor="middle">系统管理</text>
<rect x="357.600" y="414.4" width="12.400" height="5.200" fill="#d8d466" stroke="#a9a63e" stroke-width=".4"/><text x="363.800" y="417.9" font-size="2.300" fill="#fff" text-anchor="middle">认证集成</text>
<rect x="357.600" y="422.7" width="12.400" height="5.200" fill="#d8d466" stroke="#a9a63e" stroke-width=".4"/><text x="363.800" y="426.2" font-size="2.300" fill="#fff" text-anchor="middle">门户集成</text>
<rect x="357.600" y="430.5" width="12.400" height="5.200" fill="#d8d466" stroke="#a9a63e" stroke-width=".4"/><text x="363.800" y="434.0" font-size="2.300" fill="#fff" text-anchor="middle">应用集成</text>
<rect x="357.600" y="438.6" width="12.400" height="5.200" fill="#d8d466" stroke="#a9a63e" stroke-width=".4"/><text x="363.800" y="442.1" font-size="2.300" fill="#fff" text-anchor="middle">数据集成</text>
<path d="M304 412H318.600L317.800 412.800V417.200H302.200V412.800Z" fill="#b3b3b3" stroke="#8a8a8a" stroke-width=".3"/><path d="M304 421.300H318.600L317.800 422.100V426.300H302.200V422.100Z" fill="#b3b3b3" stroke="#8a8a8a" stroke-width=".3"/>
<text x="310" y="415.600" font-size="2.300" font-weight="700" fill="#444" text-anchor="middle">认证服务器</text><text x="310" y="424.800" font-size="2.300" font-weight="700" fill="#444" text-anchor="middle">目录服务器</text>
<path d="M309.700 417.200V421.300M309.700 426.300V428.800H324.600" fill="none" stroke="#777" stroke-width=".4"/>
<path d="M347.700 427.600H350.600V426.800L352.200 428.600 350.600 430.400V429.600H347.700Z" fill="#fff" stroke="#999" stroke-width=".3"/>
<rect x="311.100" y="390.900" width="59.900" height="12.900" fill="#9cc3e8" opacity=".93"/>
<text x="339.700" y="400.100" font-size="7.600" font-weight="700" fill="#d3e4f5" text-anchor="middle" font-family='Liberation Serif,Noto Serif CJK SC,serif'>统一身份认证</text>
<circle cx="304.200" cy="398.500" r="5.400" fill="url(#cb)"/><circle cx="305.400" cy="397.700" r="2.600" fill="#6db36a"/><circle cx="305.800" cy="397.300" r="1.500" fill="#fff" opacity=".9"/>
<rect x="298.700" y="472.200" width="179.600" height="43.200" fill="#fff"/>
<rect x="301.500" y="474.40" width="21.900" height="3.600" fill="#8cc21e"/><text x="312.450" y="477.10" font-size="2.400" fill="#e6f5c8" text-anchor="middle">组织接口</text>
<rect x="301.500" y="478.80" width="21.900" height="3.600" fill="#8cc21e"/><text x="312.450" y="481.50" font-size="2.400" fill="#e6f5c8" text-anchor="middle">即时通讯接口</text>
<rect x="301.500" y="483.30" width="21.900" height="3.600" fill="#8cc21e"/><text x="312.450" y="486.00" font-size="2.400" fill="#e6f5c8" text-anchor="middle">视频会议接口</text>
<rect x="301.500" y="487.80" width="21.900" height="3.600" fill="#8cc21e"/><text x="312.450" y="490.50" font-size="2.400" fill="#e6f5c8" text-anchor="middle">人力资源接口</text>
<rect x="301.500" y="492.20" width="21.900" height="3.600" fill="#8cc21e"/><text x="312.450" y="494.90" font-size="2.400" fill="#e6f5c8" text-anchor="middle">电子签章接口</text>
<rect x="301.500" y="496.80" width="21.900" height="3.600" fill="#8cc21e"/><text x="312.450" y="499.50" font-size="2.400" fill="#e6f5c8" text-anchor="middle">手机短信接口</text>
<rect x="301.500" y="501.10" width="21.900" height="3.600" fill="#8cc21e"/><text x="312.450" y="503.80" font-size="2.400" fill="#e6f5c8" text-anchor="middle">传真接口</text>
<rect x="301.500" y="505.60" width="21.900" height="3.600" fill="#8cc21e"/><text x="312.450" y="508.30" font-size="2.400" fill="#e6f5c8" text-anchor="middle">ERP软件接口</text>
<rect x="301.500" y="509.90" width="21.900" height="3.600" fill="#8cc21e"/><text x="312.450" y="512.60" font-size="2.400" fill="#e6f5c8" text-anchor="middle">财务软件接口</text>
<path d="M324.80 494.80L328.90 490.60L331.90 490.60L329.70 493.55L335.70 493.55L333.50 490.60L336.50 490.60L340.60 494.80L336.50 499.00L333.50 499.00L335.70 496.05L329.70 496.05L331.90 499.00L328.90 499.00Z" fill="#e17c1b"/>
<path d="M428.70 494.90L432.80 490.70L435.80 490.70L433.60 493.65L439.60 493.65L437.40 490.70L440.40 490.70L444.50 494.90L440.40 499.10L437.40 499.10L439.60 496.15L433.60 496.15L435.80 499.10L432.80 499.10Z" fill="#e17c1b"/>
<rect x="342" y="474.200" width="19.700" height="39.500" fill="#72b0d0"/>
<rect x="362.800" y="474.200" width="44.300" height="39.500" fill="#e8821a"/>
<rect x="408.400" y="474.200" width="19.400" height="39.500" fill="#72b0d0"/>
<text x="352.900" y="487.5" font-size="6.700" font-weight="500" fill="#e2f1f9" text-anchor="middle">外部</text>
<text x="352.900" y="496.1" font-size="6.700" font-weight="500" fill="#e2f1f9" text-anchor="middle">系统</text>
<text x="352.900" y="504.7" font-size="6.700" font-weight="500" fill="#e2f1f9" text-anchor="middle">接口</text>
<text x="418.900" y="487.3" font-size="6.700" font-weight="500" fill="#e2f1f9" text-anchor="middle">内部</text>
<text x="418.900" y="495.9" font-size="6.700" font-weight="500" fill="#e2f1f9" text-anchor="middle">模块</text>
<text x="418.900" y="504.5" font-size="6.700" font-weight="500" fill="#e2f1f9" text-anchor="middle">接口</text>
<text x="366.200" y="492.400" font-size="5.900" font-weight="700" fill="#3a2508">万户</text><text x="378.100" y="492.100" font-size="4.600" font-weight="700" fill="#fdf1e0" textLength="23.400" lengthAdjust="spacingAndGlyphs">ezOFFICE</text>
<text x="366.200" y="500.500" font-size="6.300" font-weight="700" fill="#3a2508" textLength="37.800">协同管理平台</text>
<rect x="446" y="474.8" width="31.100" height="11.7" fill="#f0c41a"/><text x="461.600" y="482.2" font-size="4.500" fill="#fbf1c8" text-anchor="middle">门户接口</text>
<rect x="446" y="488.4" width="31.100" height="11.3" fill="#f0c41a"/><text x="461.600" y="495.6" font-size="4.500" fill="#fbf1c8" text-anchor="middle">流程接口</text>
<rect x="446" y="501.6" width="31.100" height="11.9" fill="#f0c41a"/><text x="461.600" y="509.2" font-size="4.500" fill="#fbf1c8" text-anchor="middle">单点登陆接口</text>
<rect x="378" y="460.200" width="62" height="12.100" rx="1" fill="#d26a2b"/>
<text x="408.700" y="469.500" font-size="7.400" fill="#f8e0cf" text-anchor="middle" letter-spacing=".1">完善的接口</text>
<circle cx="371.600" cy="465.800" r="5.300" fill="url(#co)"/><circle cx="372.800" cy="465" r="2.600" fill="#f6c48c"/><circle cx="373.200" cy="464.600" r="1.500" fill="#fff" opacity=".9"/>
<path d="M388.700 437.500 428.500 419.500 449.200 434.200 406.600 453.300Z" fill="#000" opacity=".10" transform="translate(1.200 2.400)"/>
<path d="M388.700 437.100V438.900L406.400 454.600 449 435.900V434.200L406.400 452.700Z" fill="#e9edf2"/>
<path d="M388.700 437.100 428.500 419.300 449 434.200 406.400 452.700Z" fill="url(#pl)"/>
<text transform="matrix(.913 -.408 .75 .66 399.2 446.6)" x="0" y="0" font-size="5.6" font-weight="700" fill="#eef3fa" opacity=".92" letter-spacing="3.5">门户</text>
<path d="M395 425.600 404.500 424.200 406 431.500 396.800 433.300Z" fill="#e9f1fb"/><path d="M395.800 426.100 404 424.900 405.200 431 397.200 432.500Z" fill="#3b9be3"/><path d="M396.800 433.300 406 431.500 410.300 434.400 400.300 437.100Z" fill="#dfe4ea"/><path d="M398.200 429.600l1.600-1.600 1.200 1.800 1.400-2" stroke="#cfe6fb" stroke-width=".4" fill="none"/>
<path d="M421 410.200Q422.600 409.400 423.400 410.800L423.200 413 425.600 414.600 427.600 413.300 428.200 414.200 426.400 416.800 424.800 416.600 425 424 427 430.800 425.400 436.200 423.600 436 424.600 430.600 422.600 426.400 421.400 431.600 420 436.400 418.400 436.200 419.600 430.400 419.400 423 418.600 417 420 414.200 420.600 412.600Z" fill="#f6f7f8" stroke="#d9dde2" stroke-width=".3"/>
<circle cx="413.700" cy="426.900" r="7.300" fill="#1f90e2"/><path d="M411.800 421.600 416.400 420.800 419.600 423.400 418.400 426.600 416.200 427.400 417 430.800 414.600 433 413.400 429.800 411.200 428.600 409.800 425.400 411 423.600Z" fill="#f6c51c"/><path d="M407.200 425 408.800 427.800 408.200 430.400 406.800 428.600Z" fill="#f6c51c"/><ellipse cx="411.400" cy="423.400" rx="3.600" ry="2" fill="#fff" opacity=".18"/>
<path d="M428 423.800 432.400 421.800 440.800 426 440.800 433.600 436.400 435.600 428 431.400Z" fill="#a9c6e8"/><path d="M428 423.800 432.400 421.800 440.800 426 436.400 428Z" fill="#d7e6f6"/>
<path d="M425 430 429 428.400 433 431.600 429 433.600Z" fill="#21a8e6"/><path d="M425 430V432L429 435.600V433.600Z" fill="#e8f4fc"/>
<path d="M430.600 427 433.400 425.600 434.800 431.800 437.600 430.400 437 435.400 432.200 436.400Z" fill="#f08a24"/><path d="M429.600 431.600 432.200 430.800 433.200 436 430.400 436.400Z" fill="#f6c51c"/>
<path d="M436.800 427.600 439.600 426.400V435L436.800 436.400Z" fill="#e9eef3"/><rect x="439.800" y="426" width="1.700" height="9.600" fill="#1f90e2"/><rect x="441.600" y="428.800" width="1.600" height="7" fill="#58b947"/><rect x="443.200" y="431.200" width="1.500" height="4.800" fill="#e83e8c"/><rect x="444.600" y="429.600" width="1.300" height="5.600" fill="#9aa3ad"/><path d="M436.200 436 441 434.400 444.600 436.200 439.600 438Z" fill="#efe6cf"/>
<path d="M406.200 412.600Q404.400 393 409.500 377.300L407.500 376.700 412.800 372.200 414.500 378.800 412.600 378.200Q408.400 394 406.900 412.600Z" fill="#0a5cb8"/>
<path d="M407.700 412.500Q408.800 394 413 379.200" fill="none" stroke="#dfe8f4" stroke-width=".7"/>
<path d="M392.600 423.400Q378.600 425.600 372.200 415.500L370.800 416.800 370.300 412.600 374.900 413.300 373.900 414.200Q381 420.600 392.600 422.600Z" fill="#5b9fd9"/>
<path d="M445.800 418.600Q455 398 475.800 390.500L475.200 389 480 389.400 477.600 393.800 477 392.400Q459 400 446.700 419Z" fill="#b48aa2"/>
<path d="M447.600 419.400Q459.500 401.500 477.400 393.600" fill="none" stroke="#eadfe5" stroke-width=".9"/>
<path d="M424.400 439.200Q431.400 444.800 431.800 454L429.800 453.900 433.200 458.600 436.200 454 434.300 454Q434 443.600 424.900 438.700Z" fill="#d9682a"/>
<rect x="295.700" y="515.800" width="294" height="3.900" fill="#d3d3d3"/><rect x="295.700" y="355.700" width="1.100" height="164" fill="#d3d3d3"/>
</svg><!--/DG-->
<div id="h2" class="abs">二、门户解决方案</div>
<div class="pl" style="top:128.8px">随着企业经营规模的扩大，大规模的集团公司在信息化的过程中，已经针对业务工作建设了很多应用系统，这些业务系统产生很多对于组织来说是很宝</div>
<div class="pl" style="top:148.8px">贵的数据。随着互联网技术的日益发展，各集团企业都希望拥有自己的门户网站，借助网络这个高效的手段发布信息，搭建网上门户平台，依托于Web</div>
<div class="pl" style="top:168.8px">应用系统，做出及时快速的信息和业务的浏览、发布、管理，通过有效互动实现电子业务。但当企业想把各系统的知识进行集中的时候却出现了信息过</div>
<div class="pl" style="top:188.8px">载、系统过于复杂、数据互相冲突，员工难以找到自己想要的信息，实现电子业务越来越难的窘境。企业信息部门无法回避如下问题：</div>
<div class="li" style="top:219.7px">1）  承载门户平台对原有的电子数据怎么处理？</div>
<div class="li" style="top:239.7px">2）业务系统之间的信息如何交互？</div>
<div class="li" style="top:259.8px">3） 企业合作伙伴、协作单位、上级部门、大的客户群之间的信息如何交流？</div>
<div class="li" style="top:279.9px">4） 企业特殊角色所需要的特殊信息如何及时获取？</div>
<div class="li" style="top:300.0px">5） 采取何种方式向内部和外部提供信息？</div>
<div class="li" style="top:320.0px">6） 特殊数据和非正常数据的横向和纵向的比较，往往会产生新的信息，如何对这部分信息进行获取和管理？</div>
<div class="li" style="top:539.9px;left:295.4px"><span style="display:inline-block;width:3.6px;height:3.6px;border-radius:50%;background:#4a4a4a;position:relative;top:-1.6px;margin-right:4.8px;font-size:0;overflow:hidden">●</span>多样化的标准布局和自定义布局</div>
<svg class="abs" style="left:0;top:0;z-index:50" width="978" height="558" viewBox="0 0 978 558"><path d="M0 0H978V558H0ZM1.900 1.600V555.900H976.200V1.600Z" fill="#f3f3f3" fill-rule="evenodd"/></svg>
</div></body>
</html>
